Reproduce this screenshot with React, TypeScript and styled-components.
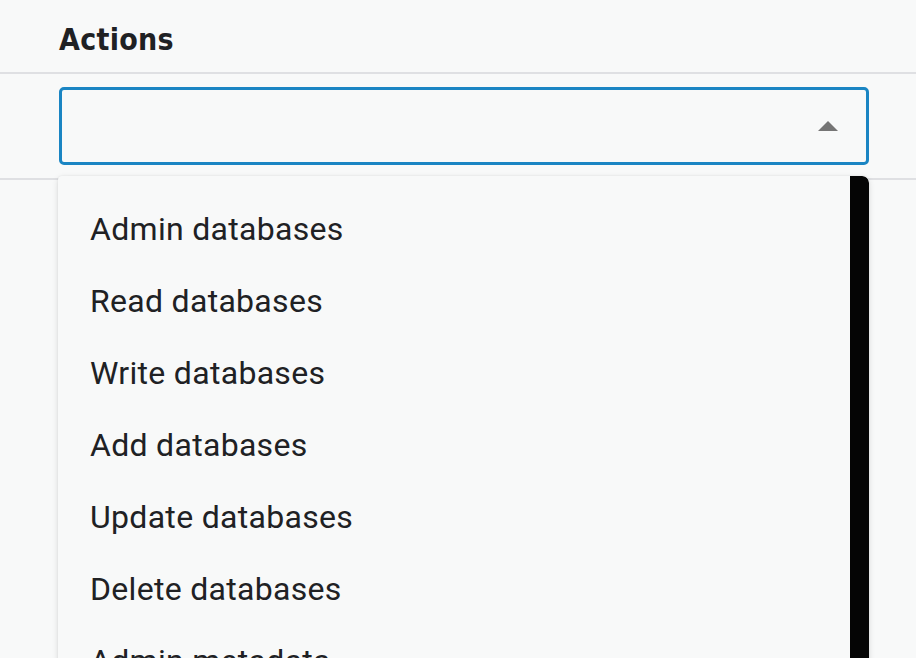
import React from "react";
import styled, { createGlobalStyle } from "styled-components";

const Global = createGlobalStyle`
  html, body { margin: 0; padding: 0; background: #f8f9f9; overflow: hidden; }
  body { font-family: Roboto, "Liberation Sans", sans-serif; }
`;

const Page = styled.div`
  width: 916px;
  height: 658px;
  background: #f8f9f9;
  display: flex;
  flex-direction: column;
  overflow: hidden;
  position: relative;
`;

const Header = styled.div`
  box-sizing: border-box;
  height: 74px;
  border-bottom: 2px solid #dfe0e3;
  padding: 22px 0 0 59px;
`;

const Title = styled.h2`
  margin: 0;
  font-family: "DejaVu Sans Condensed", "DejaVu Sans", sans-serif;
  font-weight: 700;
  font-size: 30px;
  line-height: 36px;
  color: #1f2124;
  letter-spacing: 0.3px;
`;

const FieldRow = styled.div`
  height: 106px;
  box-sizing: border-box;
  border-bottom: 2px solid #dfe0e3;
  padding: 13px 47px 0 59px;
`;

const SelectBox = styled.div`
  height: 78px;
  box-sizing: border-box;
  border: 3px solid #1a85c3;
  border-radius: 5px;
  display: flex;
  align-items: center;
  justify-content: flex-end;
  padding-right: 28px;
`;

const Menu = styled.div`
  position: absolute;
  left: 58px;
  top: 176px;
  width: 811px;
  height: 500px;
  background: #f8f9f9;
  box-shadow: 0 2px 6px rgba(0, 0, 0, 0.12), 0 0 2px rgba(0, 0, 0, 0.08);
  border-radius: 4px 6px 0 0;
  display: flex;
  overflow: hidden;
`;

const List = styled.ul`
  list-style: none;
  margin: 0;
  padding: 17px 0 0 0;
  flex: 1;
`;

const Item = styled.li`
  height: 72px;
  display: flex;
  align-items: center;
  padding-left: 32px;
  font-family: Roboto, "Liberation Sans", sans-serif;
  font-size: 32px;
  letter-spacing: 0.3px;
  color: #202124;
  white-space: nowrap;
`;

const Scrollbar = styled.div`
  width: 19px;
  background: #050505;
  border-top-right-radius: 7px;
`;

const items = [
  "Admin databases",
  "Read databases",
  "Write databases",
  "Add databases",
  "Update databases",
  "Delete databases",
  "Admin metadata",
];

export default function App() {
  return (
    <Page>
      <Global />
      <Header>
        <Title>Actions</Title>
      </Header>
      <FieldRow>
        <SelectBox>
          <svg width="20" height="10" viewBox="0 0 20 10">
            <path d="M0 10 L10 0 L20 10 Z" fill="#757575" />
          </svg>
        </SelectBox>
      </FieldRow>
      <Menu>
        <List>
          {items.map((t) => (
            <Item key={t}>{t}</Item>
          ))}
        </List>
        <Scrollbar />
      </Menu>
    </Page>
  );
}
